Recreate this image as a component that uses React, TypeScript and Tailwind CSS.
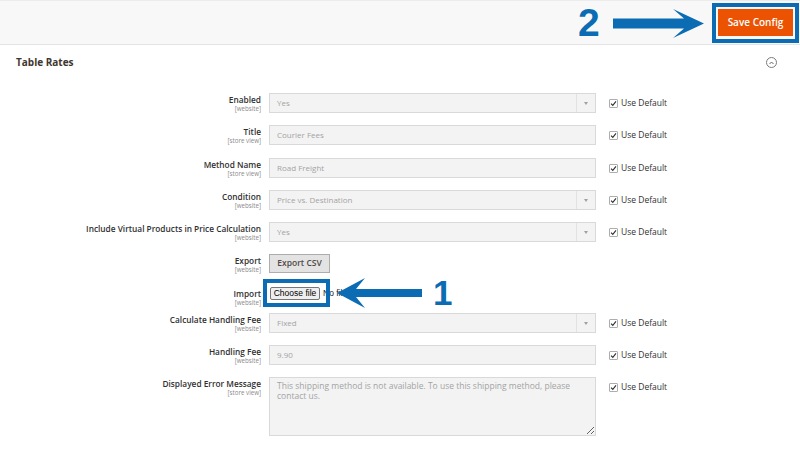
import React from "react";

const BLUE = "#0b6cb3";

function Check() {
  return (
    <div className="flex items-center h-[20px]">
      <div className="w-[9px] h-[9px] border border-[#adadad] bg-white rounded-[1px] flex items-center justify-center">
        <svg width="7" height="7" viewBox="0 0 7 7">
          <path d="M1 3.6 L2.8 5.4 L6 1.4" fill="none" stroke="#303030" strokeWidth="1.1" />
        </svg>
      </div>
      <span className="ml-[3px] text-[8.5px] text-[#303030] leading-none">Use Default</span>
    </div>
  );
}

function Label({ label, scope }: { label: string; scope: string }) {
  return (
    <div className="w-[261px] shrink-0 text-right pt-[2px]">
      <div className="text-[8.3px] leading-[10px] font-semibold text-[#303030]">{label}</div>
      <div className="text-[6.2px] leading-[7px] text-[#8a8a8a]">{scope}</div>
    </div>
  );
}

function TextInput({ value }: { value: string }) {
  return (
    <div className="h-[20px] w-full border border-[#d9d9d9] bg-[#f3f3f3] flex items-center pl-[7px] text-[8px] text-[#a3a3a3]">
      {value}
    </div>
  );
}

function SelectInput({ value }: { value: string }) {
  return (
    <div className="h-[20px] w-full border border-[#d9d9d9] bg-[#f3f3f3] flex items-stretch text-[8px] text-[#a3a3a3]">
      <div className="flex-1 flex items-center pl-[7px]">{value}</div>
      <div className="w-[19px] border-l border-[#e2e2e2] flex items-center justify-center">
        <svg width="4" height="3" viewBox="0 0 4 3">
          <path d="M0 0 L4 0 L2 3 Z" fill="#a0a0a0" />
        </svg>
      </div>
    </div>
  );
}

export default function App() {
  return (
    <div className="relative w-[800px] h-[450px] overflow-hidden bg-white font-['Open_Sans',sans-serif]">
      {/* Header */}
      <div className="h-[45px] bg-[#f8f8f8] border-t border-[#ececec] border-b border-b-[#e3e3e3] flex justify-end items-start pt-[2px] pr-[1px]">
        <div className="border-4 border-[#0b6cb3] p-[2px] pb-[3px]">
          <div className="w-[75px] h-[27px] bg-[#eb5202] text-white text-[10px] font-semibold flex items-center justify-center">
            Save Config
          </div>
        </div>
      </div>

      {/* Section title */}
      <div className="h-[48px] flex justify-between items-start pl-[16px] pr-[23px] pt-[10px]">
        <div className="text-[10px] font-bold text-[#41362f] leading-[14px]">Table Rates</div>
        <div className="mt-[2px] w-[11px] h-[11px] rounded-full border border-[#7a7a7a] flex items-center justify-center">
          <svg width="5" height="4" viewBox="0 0 5 4">
            <path d="M0.5 3 L2.5 1 L4.5 3" fill="none" stroke="#555" strokeWidth="0.9" />
          </svg>
        </div>
      </div>

      {/* Rows */}
      <div className="flex flex-col">
        <div className="flex items-start h-[32px]">
          <Label label="Enabled" scope="[website]" />
          <div className="ml-[8px] w-[327px]"><SelectInput value="Yes" /></div>
          <div className="ml-[13px]"><Check /></div>
        </div>
        <div className="flex items-start h-[33px]">
          <Label label="Title" scope="[store view]" />
          <div className="ml-[8px] w-[327px]"><TextInput value="Courier Fees" /></div>
          <div className="ml-[13px]"><Check /></div>
        </div>
        <div className="flex items-start h-[32px]">
          <Label label="Method Name" scope="[store view]" />
          <div className="ml-[8px] w-[327px]"><TextInput value="Road Freight" /></div>
          <div className="ml-[13px]"><Check /></div>
        </div>
        <div className="flex items-start h-[32px]">
          <Label label="Condition" scope="[website]" />
          <div className="ml-[8px] w-[327px]"><SelectInput value="Price vs. Destination" /></div>
          <div className="ml-[13px]"><Check /></div>
        </div>
        <div className="flex items-start h-[32px]">
          <Label label="Include Virtual Products in Price Calculation" scope="[website]" />
          <div className="ml-[8px] w-[327px]"><SelectInput value="Yes" /></div>
          <div className="ml-[13px]"><Check /></div>
        </div>
        <div className="flex items-start h-[33px]">
          <Label label="Export" scope="[website]" />
          <div className="ml-[8px]">
            <div className="w-[61px] h-[19px] bg-[#e3e3e3] border border-[#adadad] flex items-center justify-center text-[8.5px] font-semibold text-[#514943]">
              Export CSV
            </div>
          </div>
        </div>
        <div className="flex items-start h-[26px]">
          <Label label="Import" scope="[website]" />
          <div className="ml-[9px] flex items-center font-['Liberation_Sans',Arial,sans-serif]">
            <div className="w-[50px] h-[13px] bg-[#efefef] border border-[#767676] rounded-[2px] flex items-center justify-center text-[8.5px] text-black leading-none">
              Choose file
            </div>
            <span className="ml-[3px] text-[8.5px] text-[#222] leading-none">No file chosen</span>
          </div>
        </div>
        <div className="flex items-start h-[32px]">
          <Label label="Calculate Handling Fee" scope="[website]" />
          <div className="ml-[8px] w-[327px]"><SelectInput value="Fixed" /></div>
          <div className="ml-[13px]"><Check /></div>
        </div>
        <div className="flex items-start h-[32px]">
          <Label label="Handling Fee" scope="[website]" />
          <div className="ml-[8px] w-[327px]"><TextInput value="9.90" /></div>
          <div className="ml-[13px]"><Check /></div>
        </div>
        <div className="flex items-start">
          <Label label="Displayed Error Message" scope="[store view]" />
          <div className="ml-[8px] w-[327px]">
            <textarea
              readOnly
              className="block w-full h-[59px] border border-[#d9d9d9] bg-[#f3f3f3] text-[8.5px] leading-[10px] text-[#a3a3a3] pl-[7px] pr-[12px] pt-[3px] resize-y outline-none font-['Open_Sans',sans-serif]"
              defaultValue={"This shipping method is not available. To use this shipping method, please contact us."}
            />
          </div>
          <div className="ml-[13px]"><Check /></div>
        </div>
      </div>

      {/* Annotations overlay */}
      <div className="absolute inset-0 pointer-events-none">
        <div className="absolute left-[263px] top-[279px] w-[67px] h-[28px] border-4 border-[#0b6cb3]" />
        <svg className="absolute left-0 top-0" width="800" height="450" viewBox="0 0 800 450">
          <path d="M613 18.5 L684 18.5 L673 9 L704 23.5 L673 38 L684 28.5 L613 28.5 Z" fill={BLUE} />
          <path d="M422 289 L356 289 L365 278 L337 293 L365 308 L356 297 L422 297 Z" fill={BLUE} />
        </svg>
        <div className="absolute left-[578px] top-[3px] text-[39px] leading-none font-bold text-[#0b6cb3] font-['Liberation_Sans',Arial,sans-serif]">2</div>
        <div className="absolute left-[433px] top-[275px] text-[35px] leading-none font-bold text-[#0b6cb3] font-['Liberation_Sans',Arial,sans-serif]">1</div>
      </div>
    </div>
  );
}
